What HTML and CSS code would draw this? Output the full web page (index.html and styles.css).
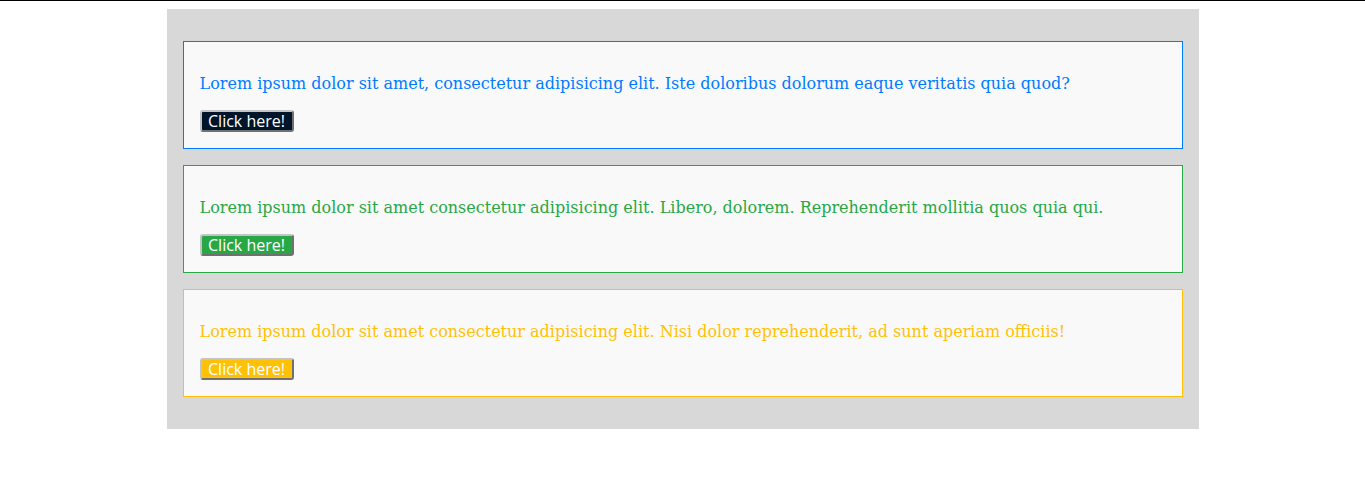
FILE: index.html
```html
<!DOCTYPE html>
<html lang="en">
<head>
<meta charset="utf-8">
<title>Cards</title>
<link rel="stylesheet" href="styles.css">
</head>
<body>
<main class="wrap">
  <section class="card card-blue">
    <p class="text">Lorem ipsum dolor sit amet, consectetur adipisicing elit. Iste doloribus dolorum eaque veritatis quia quod?</p>
    <button class="btn btn-dark">Click here!</button>
  </section>
  <section class="card card-green">
    <p class="text">Lorem ipsum dolor sit amet consectetur adipisicing elit. Libero, dolorem. Reprehenderit mollitia quos quia qui.</p>
    <button class="btn btn-green">Click here!</button>
  </section>
  <section class="card card-yellow">
    <p class="text">Lorem ipsum dolor sit amet consectetur adipisicing elit. Nisi dolor reprehenderit, ad sunt aperiam officiis!</p>
    <button class="btn btn-yellow">Click here!</button>
  </section>
</main>
</body>
</html>
```
FILE: styles.css
```css
html {
  border-top: 1px solid #000;
}
body {
  margin: 8px;
  font-family: "DejaVu Serif", serif;
  font-size: 16px;
}
.wrap {
  width: 1000px;
  margin: 0 auto;
  background: #d8d8d8;
  padding: 32px 16px;
  display: flex;
  flex-direction: column;
  gap: 16px;
}
.card {
  background: #f9f9f9;
  border: 1px solid;
  padding: 16px;
  display: flex;
  flex-direction: column;
  align-items: flex-start;
}
.text {
  margin: 16px 0;
  line-height: 20px;
}
.card-blue { border-color: #007bff; color: #007bff; }
.card-green { border-color: #28a745; color: #28a745; }
.card-yellow { border-color: #ffc107; color: #ffc107; }
.btn {
  font-family: "Open Sans", "Noto Sans", sans-serif;
  font-size: 16px;
  line-height: 18px;
  padding: 0 6px;
  border: 2px outset #c4c4c4;
  border-radius: 3px;
  color: #fff;
  width: 94px;
  height: 22px;
  white-space: nowrap;
  cursor: pointer;
}
.btn-dark { background: #001529; }
.btn-green { background: #28a745; }
.btn-yellow { background: #ffc107; }
```
